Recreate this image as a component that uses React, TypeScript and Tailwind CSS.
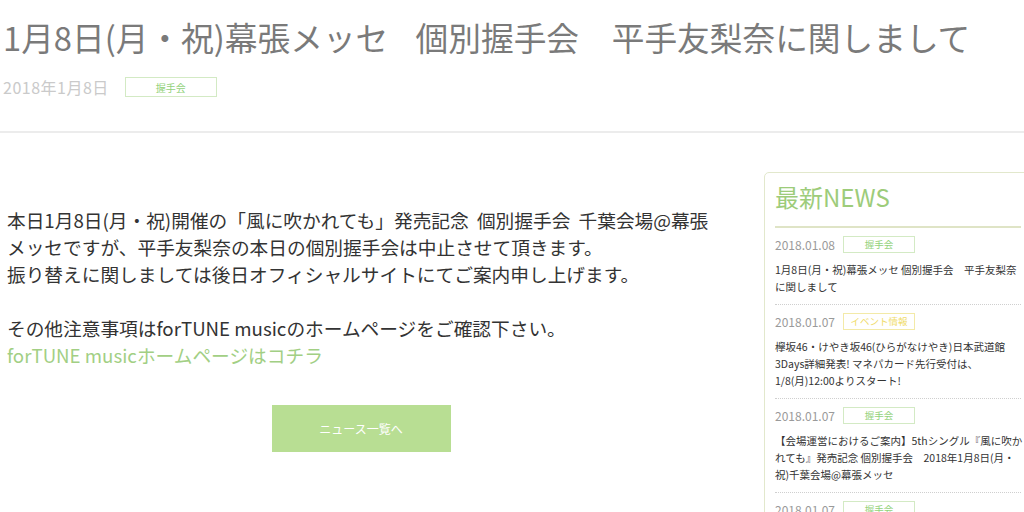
const news = [
  {
    date: "2018.01.08",
    tag: "握手会",
    kind: "green",
    lines: ["1月8日(月・祝)幕張メッセ 個別握手会　平手友梨奈", "に関しまして"],
  },
  {
    date: "2018.01.07",
    tag: "イベント情報",
    kind: "yellow",
    lines: [
      "欅坂46・けやき坂46(ひらがなけやき)日本武道館",
      "3Days詳細発表! マネパカード先行受付は、",
      "1/8(月)12:00よりスタート!",
    ],
  },
  {
    date: "2018.01.07",
    tag: "握手会",
    kind: "green",
    lines: [
      "【会場運営におけるご案内】5thシングル『風に吹か",
      "れても』発売記念 個別握手会　2018年1月8日(月・",
      "祝)千葉会場@幕張メッセ",
    ],
  },
  {
    date: "2018.01.07",
    tag: "握手会",
    kind: "green",
    lines: ["", ""],
  },
];

const Tag = ({ label, kind, className }: { label: string; kind: string; className: string }) => (
  <span
    className={
      kind === "yellow"
        ? `flex items-center justify-center border border-[#f3eaa8] text-[#f0dc6a] ${className}`
        : `flex items-center justify-center border border-[#d3eac4] text-[#93d27b] ${className}`
    }
  >
    {label}
  </span>
);

const App = () => {
  return (
    <div className="w-[1024px] h-[512px] overflow-hidden bg-white font-['Noto_Sans_CJK_JP','Noto_Sans',sans-serif]">
      <header className="pl-[3px] pt-[15px]">
        <h1 className="whitespace-nowrap text-[32.7px] leading-[44px] text-[#7a7a7a] [word-spacing:20px]">
          1月8日(月・祝)幕張メッセ 個別握手会　平手友梨奈に関しまして
        </h1>
        <div className="mt-[18px] flex h-[20px] items-center gap-[16px]">
          <span className="text-[16px] leading-[20px] tracking-[0.5px] text-[#cacaca]">2018年1月8日</span>
          <Tag label="握手会" kind="green" className="h-[20px] w-[92px] text-[10px]" />
        </div>
      </header>

      <div className="mt-[34px] h-[2px] bg-[#ececec]" />

      <div className="flex">
        <main className="w-[722px] shrink-0 pt-[73px]">
          <p className="whitespace-nowrap pl-[7px] text-[18.7px] leading-[27px] text-[#333]">
            <span className="[word-spacing:4px]">
              本日1月8日(月・祝)開催の「風に吹かれても」発売記念 個別握手会 千葉会場@幕張
            </span>
            <br />
            メッセですが、平手友梨奈の本日の個別握手会は中止させて頂きます。
            <br />
            振り替えに関しましては後日オフィシャルサイトにてご案内申し上げます。
            <br />
            <br />
            その他注意事項はforTUNE musicのホームページをご確認下さい。
            <br />
            <a className="text-[#a2cf84]">forTUNE musicホームページはコチラ</a>
          </p>
          <div className="mt-[37px] flex justify-center">
            <button className="flex h-[47px] w-[179px] items-center justify-center bg-[#b8de93] text-[12px] text-white">
              ニュース一覧へ
            </button>
          </div>
        </main>

        <aside className="ml-[42px] mt-[39px] h-[400px] w-[268px] shrink-0 rounded-[5px] border border-[#e2e8cc] px-[10px] pt-[8px]">
          <h2 className="text-[24px] leading-[32px] text-[#9dcc7a]">最新NEWS</h2>
          <div className="mt-[13px] h-[2px] w-[246px] bg-[#dfe4c6]" />
          <ul className="w-[246px]">
            {news.map((item, i) => (
              <li key={i} className="border-b border-dotted border-[#cfcfcf] pb-[9px] pt-[8px]">
                <div className="flex h-[17px] items-center">
                  <span className="w-[68px] text-[12px] leading-[17px] text-[#9a9a9a]">{item.date}</span>
                  <Tag label={item.tag} kind={item.kind} className="h-[17px] w-[72px] text-[9.5px]" />
                </div>
                <p className="mt-[8px] whitespace-nowrap text-[10.5px] leading-[17px] text-[#333]">
                  {item.lines.map((line, j) => (
                    <span key={j} className="block h-[17px]">
                      {line}
                    </span>
                  ))}
                </p>
              </li>
            ))}
          </ul>
        </aside>
      </div>
    </div>
  );
};

export default App;
